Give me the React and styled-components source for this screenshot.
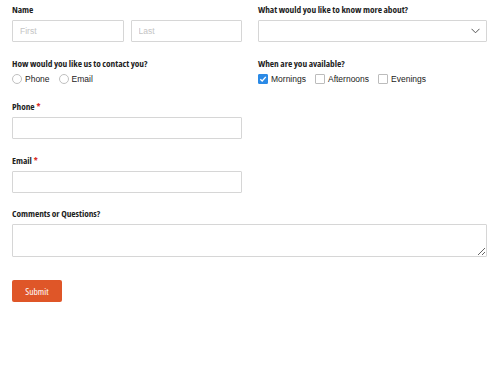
import React from "react";
import styled, { createGlobalStyle } from "styled-components";

const Global = createGlobalStyle`
  html, body { margin: 0; padding: 0; background: #fff; }
  * { box-sizing: border-box; }
`;

const Form = styled.form`
  padding: 4px 13px 0 12px;
  display: grid;
  grid-template-columns: 230px 229px;
  column-gap: 16px;
  font-family: "Liberation Sans", Arial, sans-serif;
`;

const Field = styled.div`
  display: flex;
  flex-direction: column;
  grid-column: ${(p) => (p.$full ? "1 / -1" : "auto")};
  margin-bottom: ${(p) => p.$mb || 0}px;
`;

const Label = styled.div`
  font-family: "Open Sans", sans-serif;
  font-weight: 700;
  font-stretch: 75%;
  font-size: 9.4px;
  letter-spacing: -0.05px;
  color: #1f1f1f;
  height: 16px;
  line-height: 12px;
`;

const Req = styled.span`
  color: #d9302c;
  margin-left: 2px;
  font-size: 9px;
`;

const Row = styled.div`
  display: flex;
  gap: 7px;
`;

const Input = styled.input`
  width: 100%;
  height: 22px;
  border: 1px solid #d6d6d6;
  border-radius: 1px;
  padding: 0 7px;
  font-family: "Liberation Sans", Arial, sans-serif;
  font-size: 8.5px;
  color: #333;
  outline: none;
  &::placeholder { color: #c4c4c4; }
`;

const SelectBox = styled.div`
  height: 22px;
  border: 1px solid #d6d6d6;
  border-radius: 1px;
  display: flex;
  align-items: center;
  justify-content: flex-end;
  padding-right: 6px;
`;

const TextArea = styled.textarea`
  width: 100%;
  height: 33px;
  border: 1px solid #d6d6d6;
  border-radius: 1px;
  resize: vertical;
  display: block;
  outline: none;
`;

const Options = styled.div`
  display: flex;
  align-items: center;
  gap: 9px;
  height: 14px;
  margin-top: -2px;
`;

const Option = styled.label`
  display: flex;
  align-items: center;
  gap: 3px;
  font-size: 8.5px;
  color: #222;
`;

const Radio = styled.span`
  width: 10px;
  height: 10px;
  border-radius: 50%;
  border: 1px solid #c0c0c0;
  background: #fff;
`;

const Check = styled.span`
  width: 10px;
  height: 10px;
  border-radius: 1px;
  border: 1px solid ${(p) => (p.$on ? "#2b8ae6" : "#bcbcbc")};
  background: ${(p) => (p.$on ? "#2b8ae6" : "#fff")};
  display: flex;
  align-items: center;
  justify-content: center;
`;

const Button = styled.button`
  width: 50px;
  height: 22px;
  background: #df5628;
  border: none;
  border-radius: 2px;
  color: #fff;
  font-family: "Open Sans", sans-serif;
  font-stretch: 75%;
  font-size: 9.5px;
  padding: 0;
`;

const ButtonRow = styled.div`
  grid-column: 1 / -1;
  margin-top: 23px;
`;

export default function App() {
  return (
    <>
      <Global />
      <Form onSubmit={(e) => e.preventDefault()}>
        <Field $mb={16}>
          <Label>Name</Label>
          <Row>
            <Input placeholder="First" />
            <Input placeholder="Last" />
          </Row>
        </Field>
        <Field $mb={16}>
          <Label>What would you like to know more about?</Label>
          <SelectBox>
            <svg width="9" height="6" viewBox="0 0 9 6">
              <path d="M0.5 0.8 L4.5 4.8 L8.5 0.8" fill="none" stroke="#555" strokeWidth="1" />
            </svg>
          </SelectBox>
        </Field>
        <Field $mb={15}>
          <Label>How would you like us to contact you?</Label>
          <Options>
            <Option><Radio />Phone</Option>
            <Option><Radio />Email</Option>
          </Options>
        </Field>
        <Field $mb={15}>
          <Label>When are you available?</Label>
          <Options>
            <Option>
              <Check $on>
                <svg width="8" height="8" viewBox="0 0 8 8">
                  <path d="M1.3 4.2 L3.2 6 L6.8 1.8" fill="none" stroke="#fff" strokeWidth="1.3" />
                </svg>
              </Check>
              Mornings
            </Option>
            <Option><Check />Afternoons</Option>
            <Option><Check />Evenings</Option>
          </Options>
        </Field>
        <Field $mb={16}>
          <Label>Phone<Req>*</Req></Label>
          <Input />
        </Field>
        <div />
        <Field $mb={15}>
          <Label>Email<Req>*</Req></Label>
          <Input />
        </Field>
        <div />
        <Field $full>
          <Label>Comments or Questions?</Label>
          <TextArea />
        </Field>
        <ButtonRow>
          <Button type="submit">Submit</Button>
        </ButtonRow>
      </Form>
    </>
  );
}
